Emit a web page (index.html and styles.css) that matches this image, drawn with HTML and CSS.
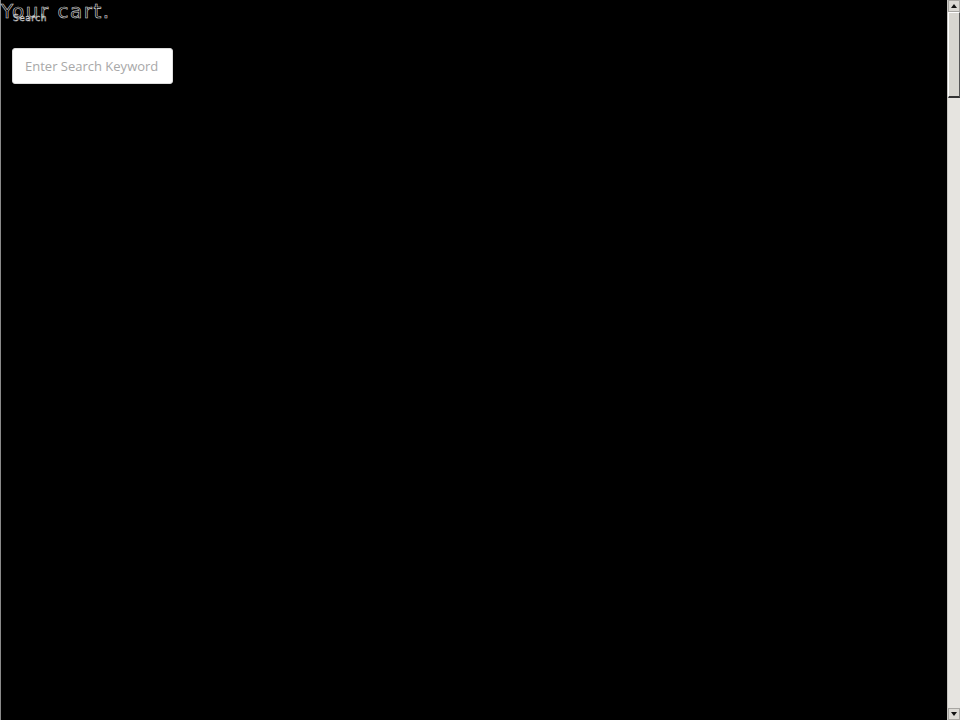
FILE: index.html
```html
<!DOCTYPE html>
<html lang="en">
<head>
<meta charset="utf-8">
<title>Your cart</title>
<link rel="stylesheet" href="styles.css">
</head>
<body>
<div class="page">
  <header class="head">
    <h1 class="title">Your cart.</h1>
    <span class="sub">Search</span>
  </header>
  <form class="search">
    <input class="search-input" type="text" placeholder="Enter Search Keyword">
  </form>
</div>
<div class="scrollbar" aria-hidden="true">
  <div class="sb-btn sb-up"><span class="tri-up"></span></div>
  <div class="sb-track">
    <div class="sb-thumb"></div>
  </div>
  <div class="sb-btn sb-down"><span class="tri-down"></span></div>
</div>
</body>
</html>
```
FILE: styles.css
```css
html, body {
  margin: 0;
  padding: 0;
  background: #000;
}
.page {
  min-height: 5800px;
  margin-right: 13px;
  border-left: 1px solid #8a8a8a;
  background: #000;
  box-sizing: border-box;
}
.head {
  position: relative;
  height: 30px;
}
.title {
  margin: 0;
  font-family: "DejaVu Sans", sans-serif;
  font-weight: 400;
  font-size: 20px;
  line-height: 22px;
  letter-spacing: 1.5px;
  color: transparent;
  -webkit-text-stroke: 0.6px #d8d8d8;
}
.sub {
  position: absolute;
  left: 12px;
  top: 13px;
  font-family: "DejaVu Sans", sans-serif;
  font-size: 9px;
  line-height: 11px;
  letter-spacing: 0.5px;
  color: transparent;
  -webkit-text-stroke: 0.5px #d0d0d0;
}
.search {
  margin: 18px 0 0 11px;
}
.search-input {
  display: block;
  width: 161px;
  height: 36px;
  box-sizing: border-box;
  border: 1px solid #ddd;
  border-radius: 3px;
  background: #fff;
  padding: 0 12px;
  font-family: "Open Sans", sans-serif;
  font-size: 13px;
  color: #333;
  outline: none;
}
.search-input::placeholder {
  color: #a8a8a8;
}
.scrollbar {
  position: fixed;
  top: 0;
  right: 0;
  bottom: 0;
  width: 13px;
  display: flex;
  flex-direction: column;
  background: #e6e4e0;
  border-left: 1px solid #c8c6c2;
  box-sizing: border-box;
}
.sb-btn {
  height: 12px;
  flex: none;
  display: flex;
  align-items: center;
  justify-content: center;
  background: #dcdad5;
  border: 1px solid #a8a6a2;
  box-sizing: border-box;
}
.sb-track {
  flex: 1;
  display: flex;
  flex-direction: column;
}
.sb-thumb {
  height: 86px;
  background: #d8d6d0;
  border: 1px solid #fff;
  border-right-color: #555;
  border-bottom: 2px solid #333;
  box-sizing: border-box;
}
.tri-up {
  width: 0;
  height: 0;
  border-left: 3px solid transparent;
  border-right: 3px solid transparent;
  border-bottom: 4px solid #111;
}
.tri-down {
  width: 0;
  height: 0;
  border-left: 3px solid transparent;
  border-right: 3px solid transparent;
  border-top: 4px solid #111;
}
```
